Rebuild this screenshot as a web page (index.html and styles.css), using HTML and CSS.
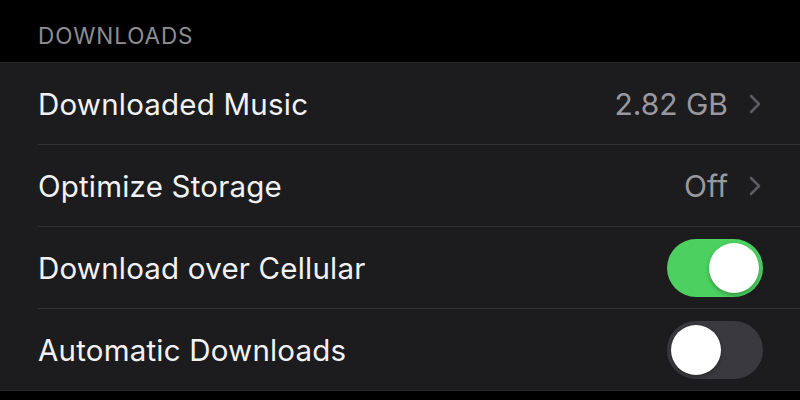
FILE: index.html
```html
<!DOCTYPE html>
<html>
<head>
<meta charset="utf-8">
<link rel="stylesheet" href="styles.css">
</head>
<body>
<div class="screen">
  <div class="section-header">DOWNLOADS</div>
  <div class="list">
    <div class="row">
      <span class="label">Downloaded Music</span>
      <span class="detail">2.82 GB
        <svg class="chev" width="14" height="22" viewBox="0 0 14 22"><path d="M3 3 L11 11 L3 19" fill="none" stroke="#5b5b60" stroke-width="2.6" stroke-linecap="round" stroke-linejoin="round"/></svg>
      </span>
    </div>
    <div class="row">
      <span class="label">Optimize Storage</span>
      <span class="detail">Off
        <svg class="chev" width="14" height="22" viewBox="0 0 14 22"><path d="M3 3 L11 11 L3 19" fill="none" stroke="#5b5b60" stroke-width="2.6" stroke-linecap="round" stroke-linejoin="round"/></svg>
      </span>
    </div>
    <div class="row">
      <span class="label">Download over Cellular</span>
      <span class="toggle on"><span class="knob"></span></span>
    </div>
    <div class="row">
      <span class="label">Automatic Downloads</span>
      <span class="toggle"><span class="knob"></span></span>
    </div>
  </div>
</div>
</body>
</html>
```

FILE: styles.css
```css
html, body {
  margin: 0;
  padding: 0;
  background: #000;
}
.screen {
  width: 800px;
  height: 400px;
  background: #000;
  font-family: Inter, "Liberation Sans", sans-serif;
  overflow: hidden;
}
.section-header {
  height: 63px;
  box-sizing: border-box;
  padding: 22px 0 0 38px;
  font-size: 22.5px;
  letter-spacing: 0.9px;
  color: #8d8d92;
  border-bottom: 1px solid #2a2a2c;
}
.list {
  background: #1c1c1e;
  border-bottom: 1px solid #2a2a2c;
}
.row {
  height: 82px;
  margin-left: 38px;
  padding-right: 37px;
  display: flex;
  align-items: center;
  justify-content: space-between;
  border-bottom: 1.5px solid #323234;
  box-sizing: border-box;
}
.row:last-child {
  border-bottom: none;
  height: 81px;
}
.label {
  font-size: 29.5px;
  color: #f2f2f4;
  letter-spacing: 0.2px;
}
.detail {
  display: flex;
  align-items: center;
  gap: 20px;
  font-size: 30px;
  color: #98989e;
  padding-right: 1px;
}
.chev {
  display: block;
}
.toggle {
  width: 96px;
  height: 58px;
  border-radius: 29px;
  background: #3a3a3e;
  position: relative;
  display: block;
}
.toggle.on {
  background: #4cd160;
}
.knob {
  position: absolute;
  top: 4px;
  left: 4px;
  width: 50px;
  height: 50px;
  border-radius: 50%;
  background: #fff;
  box-shadow: 0 2px 4px rgba(0,0,0,0.3);
}
.toggle.on .knob {
  left: 42px;
}
```
